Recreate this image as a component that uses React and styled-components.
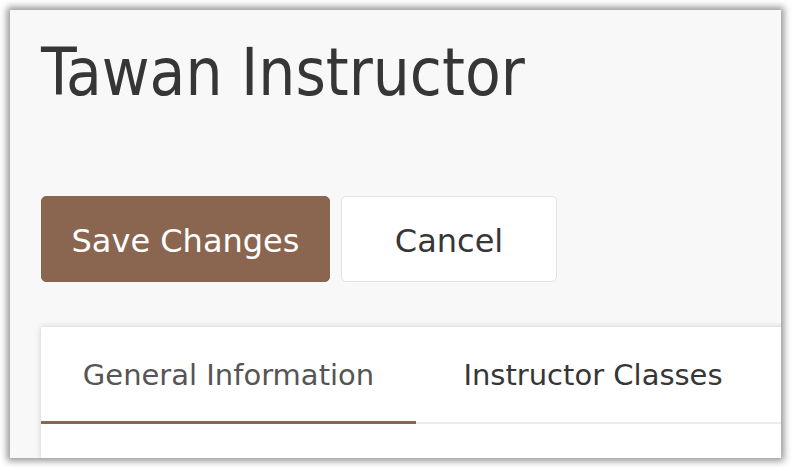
import React from "react";
import styled, { createGlobalStyle } from "styled-components";

const Global = createGlobalStyle`
  html, body { margin: 0; padding: 0; background: #ffffff; }
  body { font-family: "DejaVu Sans", sans-serif; }
  * { box-sizing: border-box; }
`;

const Frame = styled.div`
  margin: 10px;
  width: 771px;
  height: 448px;
  background: #f8f8f8;
  box-shadow: 0 0 7px 3px rgba(0, 0, 0, 0.42);
  overflow: hidden;
  padding: 30px 0 0 31px;
  display: flex;
  flex-direction: column;
`;

const Title = styled.h1`
  margin: 0;
  font-family: "DejaVu Sans Condensed", "DejaVu Sans", sans-serif;
  font-stretch: condensed;
  font-size: 65px;
  line-height: 65px;
  font-weight: normal;
  color: #363636;
`;

const Actions = styled.div`
  display: flex;
  gap: 11px;
  margin-top: 91px;
`;

const Button = styled.button`
  height: 86px;
  width: ${(p) => p.$w}px;
  border-radius: 5px;
  font-family: "DejaVu Sans", sans-serif;
  font-size: 32px;
  cursor: pointer;
  background: ${(p) => (p.$primary ? "#8a6651" : "#ffffff")};
  color: ${(p) => (p.$primary ? "#ffffff" : "#363636")};
  border: 1px solid ${(p) => (p.$primary ? "#8a6651" : "#e2e2e2")};
  padding: 3px 0 0;
`;

const Card = styled.div`
  margin-top: 45px;
  flex: 1;
  background: #ffffff;
  box-shadow: 0 0 6px rgba(0, 0, 0, 0.18);
  margin-right: -20px;
`;

const Tabs = styled.div`
  display: flex;
  border-bottom: 2px solid #ececec;
`;

const Tab = styled.div`
  width: ${(p) => p.$w}px;
  height: 97px;
  display: flex;
  align-items: center;
  justify-content: center;
  padding-top: 1px;
  font-size: 29px;
  color: ${(p) => (p.$active ? "#555555" : "#363636")};
  border-bottom: 3px solid ${(p) => (p.$active ? "#8a6651" : "transparent")};
  margin-bottom: -2px;
`;

export default function App() {
  return (
    <>
      <Global />
      <Frame>
        <Title>Tawan Instructor</Title>
        <Actions>
          <Button $primary $w={289}>Save Changes</Button>
          <Button $w={216}>Cancel</Button>
        </Actions>
        <Card>
          <Tabs>
            <Tab $active $w={375}>General Information</Tab>
            <Tab $w={354}>Instructor Classes</Tab>
          </Tabs>
        </Card>
      </Frame>
    </>
  );
}
